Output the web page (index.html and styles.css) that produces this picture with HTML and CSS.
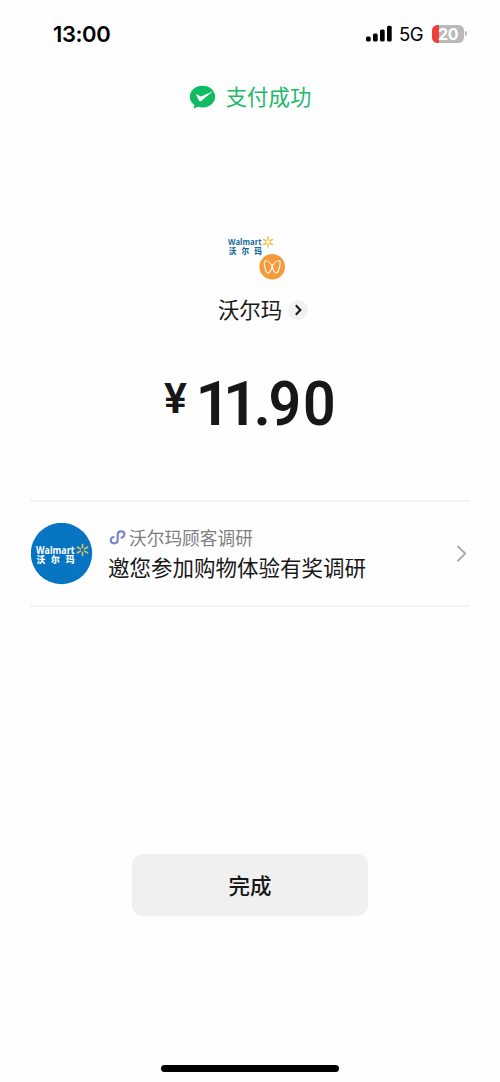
FILE: index.html
```html
<!DOCTYPE html>
<html lang="zh-CN">
<head>
<meta charset="utf-8">
<title>支付成功</title>
<link rel="stylesheet" href="styles.css">
</head>
<body>
<div class="screen">
  <header class="status-bar">
    <span class="time">13:00</span>
    <span class="status-icons">
      <svg class="signal" width="26" height="17" viewBox="0 0 26 17"><rect x="0" y="11.500" width="4.700" height="5" rx="1.500"/><rect x="7" y="8.500" width="4.700" height="8" rx="1.500"/><rect x="14" y="4.500" width="4.700" height="12" rx="1.500"/><rect x="21" y="0.800" width="4.700" height="15.700" rx="1.500"/></svg>
      <span class="network">5G</span>
      <span class="battery">20</span>
      <span class="battery-tip"></span>
    </span>
  </header>

  <div class="result">
    <svg width="27" height="25" viewBox="0 0 27 25"><path fill="#10bb62" d="M13.5.8C6.5.8.8 5.6.8 11.8c0 3.3 1.8 6.3 4.6 8.3l-.8 3.7 4.1-2.1c1.500.5 3.100.8 4.800.8 7 0 12.700-4.800 12.700-10.800S20.500.8 13.500.8z"/><path fill="#fff" d="M7.400 10.300c-.5-.8.3-1.400 1-.9l2.700 1.800c.5.3.9.3 1.500 0L24 6.200 12.100 16c-.8.7-1.700.5-2.200-.4z"/></svg>
    <span class="result-text">支付成功</span>
  </div>

  <div class="merchant-logo">
    <svg width="60" height="48" viewBox="0 0 60 48">
      <g class="logo-type navy"><text x="0" y="9.800" font-size="9.500" textLength="33.500" lengthAdjust="spacingAndGlyphs">Walmart</text><text class="logo-cn" x="0.800" y="18.500" font-size="7.600" textLength="33" lengthAdjust="spacing">沃尔玛</text></g>
      <g transform="translate(40 7)" stroke="#f6bd3e" stroke-width="1.500" stroke-linecap="round"><path d="M0-5V-2M0 5V2M-4.400-2.500-1.800-1M4.400 2.500 1.800 1M4.400-2.500 1.800-1M-4.400 2.500-1.800 1"/></g>
      <circle cx="44.200" cy="31.800" r="12.800" fill="#f19b3d"/>
      <path d="M44.200 31.500C42.500 28 39.500 25.300 37.300 25.800 35.400 26.300 36.500 31 37.500 34.500 38.300 37.500 39.800 38.500 41.200 37.500 42.800 36.200 43.600 33.800 44.200 31.500 44.800 33.800 45.600 36.200 47.200 37.500 48.600 38.500 50.100 37.500 50.900 34.500 51.900 31 53 26.300 51.100 25.800 48.900 25.300 45.900 28 44.200 31.500z" fill="none" stroke="#fff2df" stroke-width="1.200"/>
    </svg>
  </div>

  <div class="merchant">
    <span class="merchant-name">沃尔玛</span>
    <span class="merchant-more"><svg width="20" height="20" viewBox="0 0 20 20"><path d="m7.800 5.300 4.600 4.700-4.600 4.700" fill="none" stroke="#171717" stroke-width="2"/></svg></span>
  </div>

  <div class="amount">
    <svg width="180" height="80" viewBox="0 -12 180 80"><text class="currency" x="2" y="37.500">¥</text><text class="digits" x="33.500 61 91.500" y="49.500">11.</text><text class="digits" transform="translate(106.500 49.500) scale(.93 1)" x="0 37" y="0">90</text></svg>
  </div>

  <div class="survey">
    <svg class="survey-logo" width="62" height="62" viewBox="0 0 62 62">
      <circle cx="30.500" cy="30.500" r="30.700" fill="#0875c3"/>
      <g class="logo-type white"><text x="5" y="31.300" font-size="11" textLength="38.500" lengthAdjust="spacingAndGlyphs">Walmart</text><text class="logo-cn" x="5.500" y="40.300" font-size="8.800" textLength="38" lengthAdjust="spacing">沃尔玛</text></g>
      <g transform="translate(51.500 27)" stroke="#e3bd55" stroke-width="1.600" stroke-linecap="round"><path d="M0-5.500V-2.200M0 5.500V2.200M-5-2.800-2-1.100M5 2.800 2 1.100M5-2.800 2-1.100M-5 2.800-2 1.100"/></g>
    </svg>
    <div class="survey-copy">
      <div class="survey-source"><svg width="18" height="18" viewBox="0 0 18 18"><path d="M5.600 8.300C3.800 8.700 2.800 9.900 2.800 11.600c0 1.700 1.300 3 3.200 3 2.200 0 3.700-1.300 3.700-3.300V6c0-2 1.300-3.300 3.400-3.300 2 0 3.300 1.200 3.300 2.900 0 1.700-1.100 2.900-2.800 3.300" transform="translate(0 .7)" fill="none" stroke="#7f84cb" stroke-width="2.200" stroke-linecap="round"/></svg><span>沃尔玛顾客调研</span></div>
      <div class="survey-title">邀您参加购物体验有奖调研</div>
    </div>
    <svg class="survey-arrow" width="12" height="20" viewBox="0 0 12 20"><path d="m2.500 2 7.700 7.600-7.700 7.600" fill="none" stroke="#a9a9a9" stroke-width="1.900"/></svg>
  </div>

  <button class="done">完成</button>
  <div class="home-indicator"></div>
</div>
</body>
</html>
```
FILE: styles.css
```css
* { box-sizing: border-box; }
body { margin: 0; background: #fff; }
svg { display: block; flex: none; }
.screen {
  width: 500px;
  height: 1082px;
  display: flex;
  flex-direction: column;
  align-items: center;
  background: #fefefe;
  color: #171717;
  font-family: "Noto Sans CJK SC", sans-serif;
  white-space: nowrap;
}
.status-bar {
  width: 100%;
  height: 68px;
  padding: 0 33px 1px 53px;
  display: flex;
  align-items: center;
  justify-content: space-between;
  font-family: Inter, sans-serif;
  color: #000;
}
.time { font-size: 22px; font-weight: 600; letter-spacing: -.4px; }
.status-icons { display: flex; align-items: center; }
.network { width: 25px; margin: 0 8px 0 7px; font-size: 18.5px; letter-spacing: -.4px; }
.battery {
  width: 32px;
  height: 18px;
  border-radius: 5.500px;
  background: linear-gradient(90deg, #ed4139 7px, #b9b9b9 7px);
  color: #fff;
  font-size: 16px;
  font-weight: 700;
  line-height: 18px;
  letter-spacing: -.4px;
  text-align: center;
}
.battery-tip { width: 2px; height: 5px; margin-left: 1px; border-radius: 0 2px 2px 0; background: #b9b9b9; }
.result {
  height: 58px;
  display: flex;
  align-items: center;
  gap: 10px;
  color: #1db86b;
  font-size: 21.400px;
}
.result-text { padding-bottom: 3px; }
.merchant-logo { height: 48px; margin: 109px 0 0 16px; }
.merchant { height: 32px; margin: 11px 0 0 26px; display: flex; align-items: center; gap: 6px; font-size: 21.400px; }
.merchant-name { padding-bottom: 3px; }
.merchant-more { border-radius: 50%; background: #f1f1f1; }
.amount { height: 80px; margin: 37px 0 0 4px; }
.currency, .digits { fill: #171717; font-family: Roboto, sans-serif; }
.currency { font-size: 43px; font-weight: 600; }
.digits { font-size: 61.500px; font-weight: 600; }
.survey {
  width: 440px;
  height: 107px;
  margin-top: 57px;
  padding: 0 3px 0 1px;
  display: flex;
  align-items: center;
  border-top: 2px solid #f3f3f3;
  border-bottom: 2px solid #f3f3f3;
}
.survey-copy { flex: 1; margin-left: 15px; padding-bottom: 2px; }
.survey-source { display: flex; align-items: center; gap: 3px; height: 28px; color: #7e7e7e; font-size: 17.700px; }
.survey-title { height: 31px; font-size: 21.500px; line-height: 31px; }
.logo-type { font-family: "Open Sans", sans-serif; font-weight: 700; }
.logo-cn { font-family: "Noto Sans CJK SC", sans-serif; font-weight: 900; }
.navy { fill: #146a9b; }
.white { fill: #fff; }
.done {
  width: 236px;
  height: 62px;
  margin-top: 247px;
  padding: 0;
  border: 0;
  border-radius: 11px;
  background: #f0f0f0;
  color: #171717;
  font: 500 21.500px/62px "Noto Sans CJK SC", sans-serif;
}
.home-indicator { width: 178px; height: 7px; margin-top: 149px; border-radius: 4px; background: #000; }
```
